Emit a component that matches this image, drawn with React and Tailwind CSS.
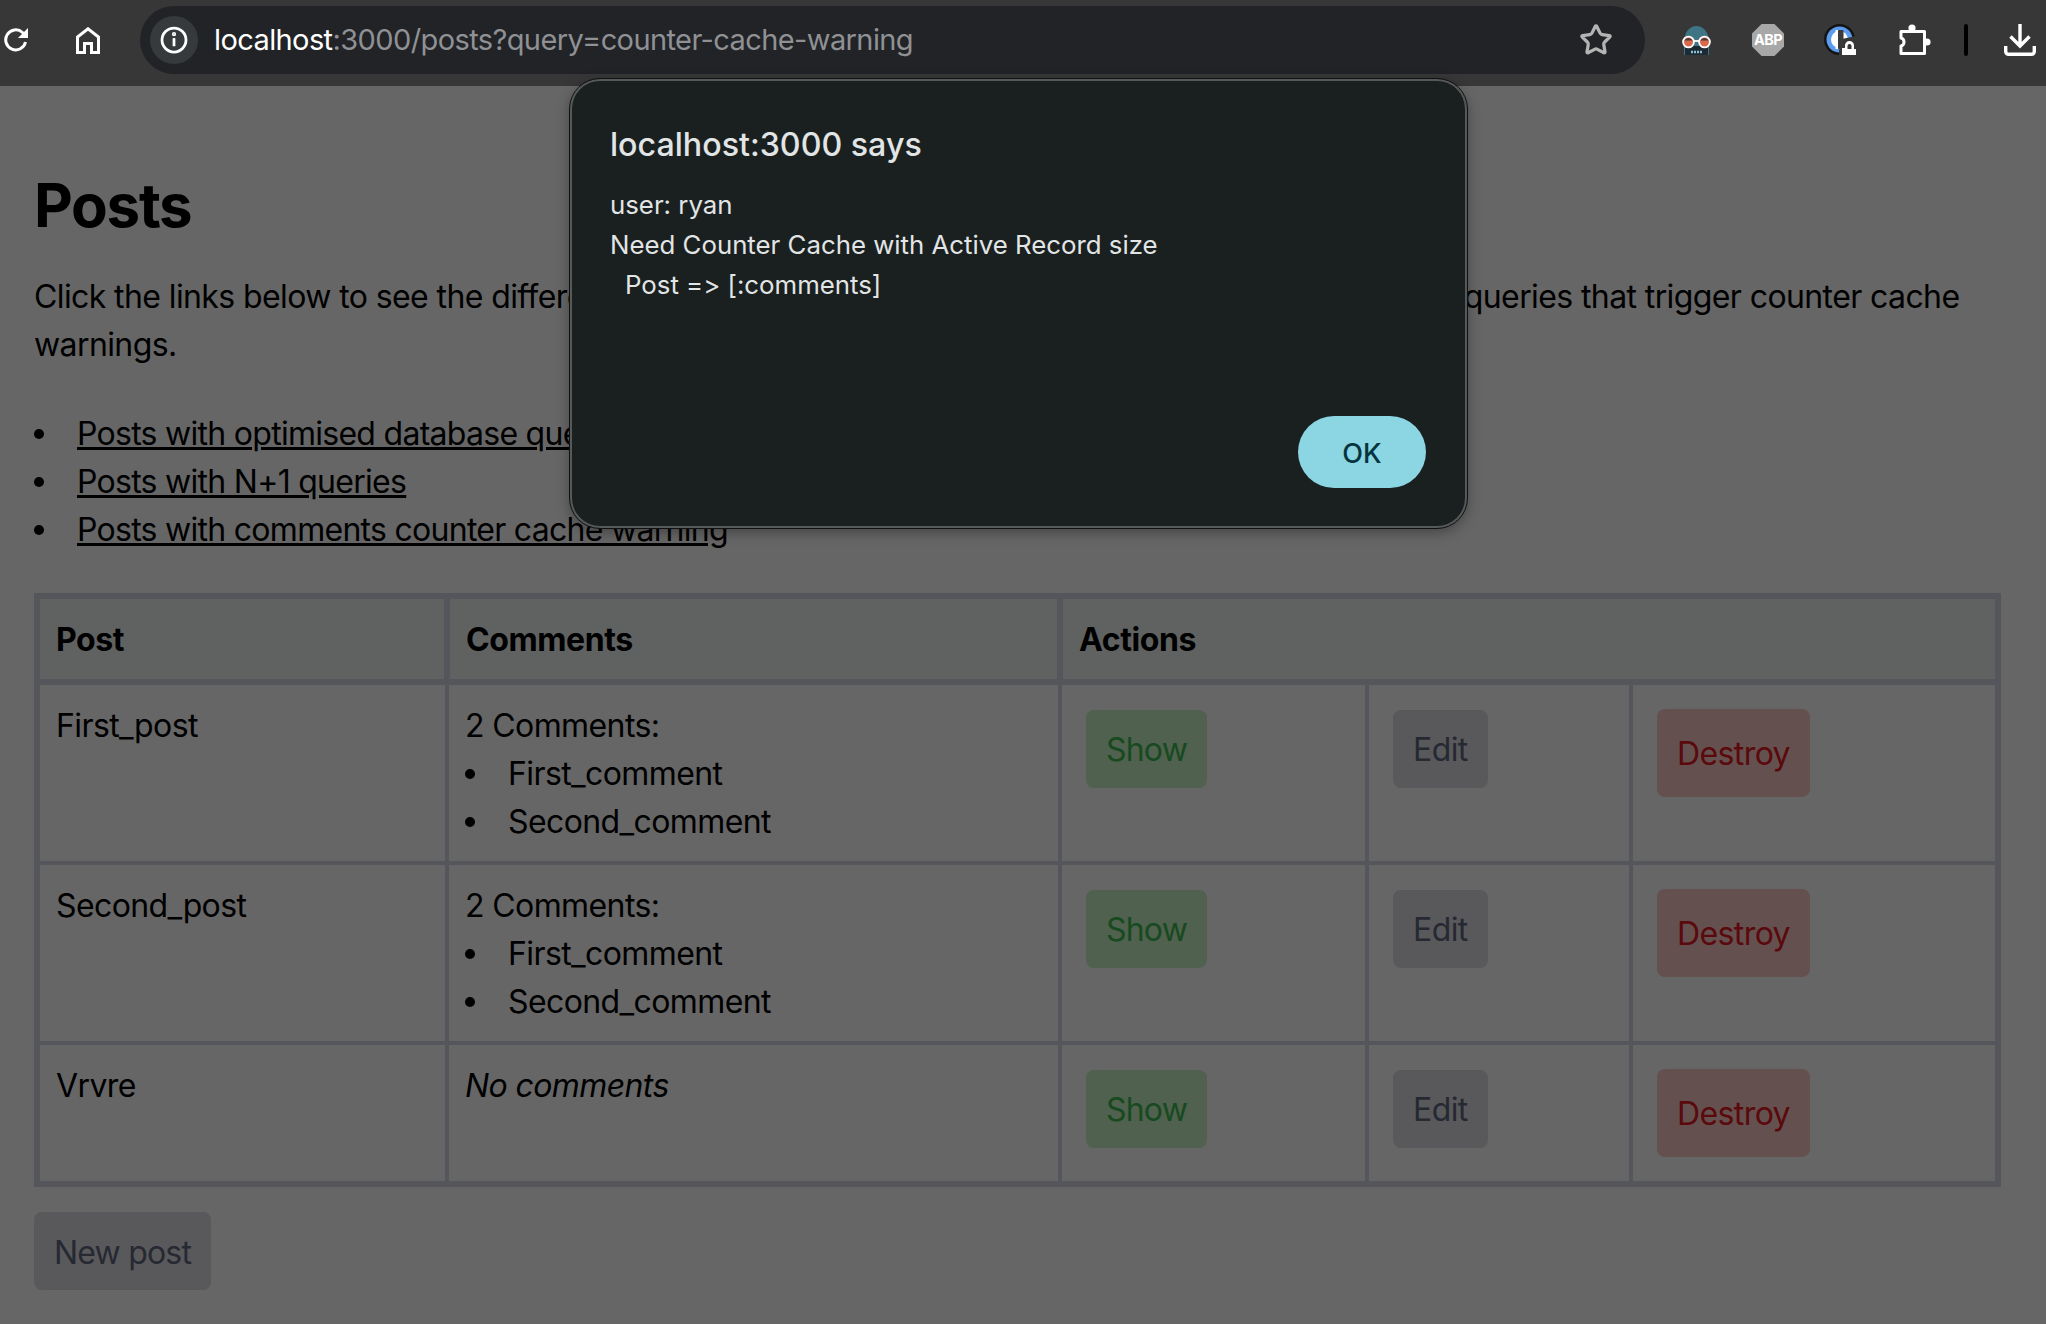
import React from "react";
import { Star } from "lucide-react";

function Reload() {
  return (
    <svg width="24" height="24" viewBox="0 0 24 24" fill="none" stroke="#fff" strokeWidth="3" className="block">
      <path d="M21.5 14A10 10 0 1 1 18.5 4.5L22 8" />
      <path d="M24 0v10H14z" fill="#fff" stroke="none" />
    </svg>
  );
}

function Home() {
  return (
    <svg width="24" height="27" viewBox="0 0 24 27" fill="none" stroke="#fff" strokeWidth="3" className="block">
      <path d="M1.5 25.5V10L12 1.8 22.5 10v15.5h-7v-9h-7v9z" />
    </svg>
  );
}

function Spy() {
  return (
    <svg width="29" height="29" viewBox="0 0 29 29" className="block">
      <path d="M2 16C2 6 8 0 14.5 0S27 6 27 16v13H2z" fill="#3f7484" />
      <path d="M3 20h23v9H3z" fill="#1b2a33" />
      <circle cx="6.5" cy="16" r="5.4" fill="#d9694a" stroke="#fff" strokeWidth="1.8" />
      <circle cx="22.5" cy="16" r="5.4" fill="#d9694a" stroke="#fff" strokeWidth="1.8" />
      <path d="M2.4 14.6a4.5 4.5 0 0 1 8.2 0zM18.4 14.6a4.5 4.5 0 0 1 8.2 0z" fill="#4a3a38" />
      <path d="M11.5 15h6" stroke="#fff" strokeWidth="1.8" />
      <path d="M9 26h11" stroke="#8cc0d0" strokeWidth="2.4" strokeDasharray="2 1" />
    </svg>
  );
}

function Abp() {
  return (
    <div className="w-[32px] h-[32px] bg-[#a8a8a8] flex items-center justify-center text-white font-bold text-[14.5px] leading-none [clip-path:polygon(30%_0,70%_0,100%_30%,100%_70%,70%_100%,30%_100%,0_70%,0_30%)]">
      ABP
    </div>
  );
}

function OnePass() {
  return (
    <svg width="34" height="32" viewBox="0 0 34 32" className="block">
      <circle cx="15.5" cy="15.5" r="15.5" fill="#141414" />
      <circle cx="15.5" cy="15.5" r="13" fill="#5b9bf0" />
      <circle cx="15.5" cy="15.5" r="8.5" fill="#fff" />
      <path d="M15.5 15.5 32 12v20H15.5z" fill="#373737" />
      <rect x="14" y="6" width="5.5" height="19" rx="1" fill="#3a3a3a" />
      <rect x="11.5" y="6" width="2.5" height="19" fill="#fff" />
      <path d="M15 32v-6l4-2v-6h5a6 6 0 0 1 6 6v8z" fill="#373737" />
      <path d="M18 31v-7h3v-2.500a4.500 4.500 0 0 1 9 0V25h2v6z" fill="#fff" />
      <path d="M23.500 25v-3a2 2 0 0 1 4 0v3z" fill="#373737" />
    </svg>
  );
}

function Puzzle() {
  return (
    <svg width="34" height="32" viewBox="0 0 34 32" fill="none" stroke="#fff" strokeWidth="3" strokeLinejoin="round" className="block">
      <path d="M4 7.500h23.500v22H4V22c4-1 4-7 0-8z" />
      <circle cx="15" cy="4" r="3.600" fill="#fff" stroke="none" />
      <circle cx="30" cy="18" r="3.600" fill="#fff" stroke="none" />
    </svg>
  );
}

function Download() {
  return (
    <svg width="32" height="32" viewBox="0 0 32 32" fill="none" stroke="#fff" strokeWidth="3.400" className="block">
      <path d="M16 0v22M6.500 12.500 16 22l9.500-9.500" />
      <path d="M1.700 22v5.500a2.800 2.800 0 0 0 2.800 2.800h23a2.800 2.800 0 0 0 2.800-2.800V22" />
    </svg>
  );
}

function Toolbar() {
  return (
    <div className="h-[86px] bg-[#373737] flex items-center font-['Inter',sans-serif]">
      <div className="w-[140px] shrink-0 flex items-center -mt-[6px]">
        <div className="ml-[4px]"><Reload /></div>
        <div className="ml-[48px]"><Home /></div>
      </div>
      <div className="w-[1505px] shrink-0 h-[68px] rounded-full bg-[#212327] flex items-center pl-[10px] pr-[32px] -mt-[6px]">
        <div className="w-[48px] h-[48px] rounded-full bg-[#373a3c] flex items-center justify-center">
          <svg width="30" height="30" viewBox="0 0 24 24" fill="none" stroke="#fff" strokeWidth="2.200"><circle cx="12" cy="12" r="9.600" /><path d="M12 10.500v6.500" /><circle cx="12" cy="7.300" r=".6" fill="#fff" /></svg>
        </div>
        <div className="ml-[16px] text-[29px] leading-none text-[#8f9194] flex-1 -mt-[1px]">
          <span className="text-white">localhost</span>:3000/posts?query=counter-cache-warning
        </div>
        <Star size={34} strokeWidth={2.300} className="text-[#b4b4b4]" />
      </div>
      <div className="flex items-center -mt-[6px]">
        <div className="ml-[37px]"><Spy /></div>
        <div className="ml-[41px]"><Abp /></div>
        <div className="ml-[40px]"><OnePass /></div>
        <div className="ml-[39px]"><Puzzle /></div>
        <div className="ml-[33px] w-[4px] h-[32px] bg-black rounded"></div>
        <div className="ml-[36px]"><Download /></div>
      </div>
    </div>
  );
}

function Btn({ tone, children, tall }) {
  const tones = {
    green: "bg-[#50614f] text-[#184a1f] tracking-[-0.8px]",
    gray: "bg-[#59595c] text-[#262932]",
    red: "bg-[#655050] text-[#5a0a0c]",
  };
  return (
    <span className={"inline-block align-top rounded-[8px] px-[20px] " + (tall ? "pt-[21px] pb-[19px] " : "pt-[16px] pb-[14px] mt-[1px] ") + tones[tone]}>
      {children}
    </span>
  );
}

function Bullet({ children }) {
  return (
    <li className="relative before:absolute before:top-[19px] before:left-[-43px] before:w-[10px] before:h-[10px] before:rounded-full before:bg-black">
      {children}
    </li>
  );
}

function Row({ name, comments }) {
  return (
    <tr>
      <td className="border-4 border-[#55565b] pl-[16px] pr-[16px] pt-[17px] pb-[15px] align-top">{name}</td>
      <td className="border-4 border-[#55565b] pl-[16px] pr-[16px] pt-[17px] pb-[15px] align-top">
        {comments ? (
          <div>
            <div>2 Comments:</div>
            <ul className="list-none pl-[43px]">
              <Bullet>First_comment</Bullet>
              <Bullet>Second_comment</Bullet>
            </ul>
          </div>
        ) : (
          <em>No comments</em>
        )}
      </td>
      <td className="border-4 border-[#55565b] pl-[24px] py-[24px] align-top"><Btn tone="green">Show</Btn></td>
      <td className="border-4 border-[#55565b] pl-[24px] py-[24px] align-top"><Btn tone="gray">Edit</Btn></td>
      <td className="border-4 border-[#55565b] pl-[24px] py-[24px] align-top"><Btn tone="red" tall>Destroy</Btn></td>
    </tr>
  );
}

export default function App() {
  return (
    <div className="relative w-[2046px] h-[1324px] overflow-hidden bg-[#666666] text-black text-[32px] leading-[48px] tracking-[-0.6px] font-['Inter',sans-serif]">
      <Toolbar />
      <div className="px-[34px]">
        <h1 className="text-[60px] leading-[72px] font-bold tracking-[-1.3px] mt-[83px]">Posts</h1>
        <p className="mt-[32px] w-[1966px]">
          Click the links below to see the differences between optimised database queries, N+1 queries and queries that trigger counter cache warnings.
        </p>
        <ul className="list-none pl-[43px] mt-[41px] tracking-[-0.72px]">
          <Bullet><a className="underline">Posts with optimised database queries</a></Bullet>
          <Bullet><a className="underline">Posts with N+1 queries</a></Bullet>
          <Bullet><a className="underline">Posts with comments counter cache warning</a></Bullet>
        </ul>
        <table className="mt-[39px] w-[1964px] table-fixed border-collapse border-[6px] border-[#55565b]">
          <colgroup>
            <col className="w-[410px]" />
            <col className="w-[613px]" />
            <col className="w-[307px]" />
            <col className="w-[264px]" />
            <col className="w-[367px]" />
          </colgroup>
          <thead>
            <tr className="bg-[#5f6261] font-bold text-left tracking-[-0.4px]">
              <th className="border-[6px] border-[#55565b] pl-[16px] pt-[17px] pb-[15px]">Post</th>
              <th className="border-[6px] border-[#55565b] pl-[16px] pt-[17px] pb-[15px]">Comments</th>
              <th colSpan={3} className="border-[6px] border-[#55565b] pl-[16px] pt-[17px] pb-[15px]">Actions</th>
            </tr>
          </thead>
          <tbody>
            <Row name="First_post" comments />
            <Row name="Second_post" comments />
            <Row name="Vrvre" />
          </tbody>
        </table>
        <div className="mt-[25px]">
          <span className="inline-block rounded-[8px] px-[20px] pt-[17px] pb-[13px] bg-[#59595c] text-[#262932] tracking-[-0.8px]">New post</span>
        </div>
      </div>

      <div className="absolute left-[570px] top-[79px] w-[897px] h-[449px] rounded-[30px] bg-[#1a2020] border-[2px] border-[#55595a] outline-[1.5px] outline-[#111] shadow-[0_4px_14px_rgba(0,0,0,0.35)] flex flex-col pl-[38px] pr-[39px] text-[#e2e5e5] tracking-normal [font-variant-ligatures:none] [font-feature-settings:'calt'_0]">
        <div className="mt-[42px] text-[32.200px] leading-[44px] font-medium">localhost:3000 says</div>
        <div className="mt-[18px] text-[25.800px] leading-[40px]">
          <div>user: ryan</div>
          <div>Need Counter Cache with Active Record size</div>
          <div className="pl-[15px]">Post =&gt; [:comments]</div>
        </div>
        <div className="mt-auto mb-[38px] self-end w-[128px] h-[72px] rounded-full bg-[#8cd5e2] text-[#05343d] text-[27px] pt-[3px] font-medium flex items-center justify-center">OK</div>
      </div>
    </div>
  );
}
